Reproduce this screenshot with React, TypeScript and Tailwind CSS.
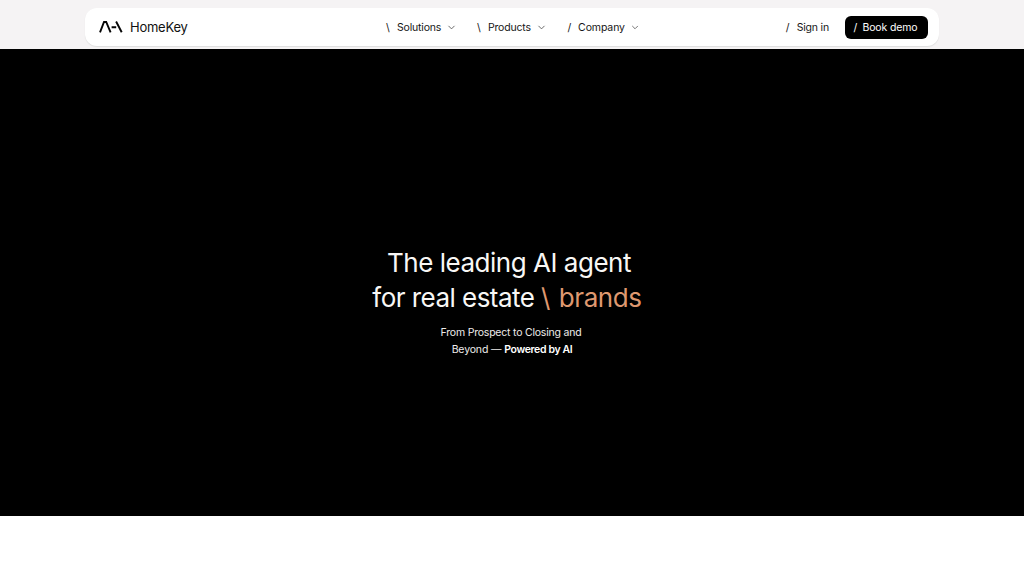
import { ChevronDown } from "lucide-react";

const links = [
  { mark: "\\", label: "Solutions", width: "w-[91px]", gap: "w-[11px]", text: "tracking-[-0.18px]" },
  { mark: "\\", label: "Products", width: "w-[90.5px]", gap: "w-[11px]", text: "tracking-[-0.18px]" },
  { mark: "/", label: "Company", width: "w-[72.5px]", gap: "w-[11.5px]", text: "tracking-[-0.1px]" },
];

function Logo() {
  return (
    <a href="#" className="flex w-[287.5px] items-center">
      <svg width="24" height="12" viewBox="0 0 24 12" fill="none" stroke="#050505" strokeWidth="1.9">
        <path d="M1 11.3 5 1H7.2l4.4 10.3M12.6 6.2h4.6M17.1.5l5.6 10.8" />
      </svg>
      <span className="ml-[7.5px] text-[13px] leading-4 tracking-[-0.25px] text-[#111]">HomeKey</span>
    </a>
  );
}

export default function App() {
  return (
    <div className="min-h-[576px] bg-white font-['Inter',sans-serif]">
      <header className="h-[49px] bg-[#f5f3f4] px-[85px] pt-2">
        <nav className="flex h-[38px] w-[854px] items-center rounded-xl bg-white pr-[11px] pl-[13.5px] text-[10.5px] leading-[17px] text-[#161616] shadow-[0_1px_1px_#dedede]">
          <Logo />
          <div className="flex pt-px">
            {links.map((link) => (
              <a key={link.label} href="#" className={`flex items-center ${link.width}`}>
                <span className={link.gap}>{link.mark}</span>
                <span className={link.text}>{link.label}</span>
                <ChevronDown size={11} strokeWidth={1.9} className="ml-[5px] text-[#555]" />
              </a>
            ))}
          </div>
          <a href="#" className="ml-auto flex pt-px">
            <span className="w-[11px]">/</span>
            <span className="tracking-[-0.18px]">Sign in</span>
          </a>
          <a href="#" className="ml-[16px] flex h-[23px] w-[83px] items-center rounded-[6px] bg-black pt-px pl-[8.5px] whitespace-nowrap text-white">
            <span className="w-[9px]">/</span>
            <span className="tracking-[-0.15px]">Book demo</span>
          </a>
        </nav>
      </header>
      <main className="h-[467px] bg-black pt-[196px] text-center text-[#f8f7f5]">
        <h1 className="flex flex-col items-center text-[26px] leading-[35px] font-normal">
          <span className="mr-[6px] tracking-[-0.48px]">The leading AI agent</span>
          <span className="mr-[10px] tracking-[-0.54px]">
            for real estate{" "}
            <span className="text-[#df986f]">
              <span className="mr-[2px]">\</span> <span className="tracking-[-0.4px]">brands</span>
            </span>
          </span>
        </h1>
        <p className="mt-[9px] flex flex-col items-center text-[10.5px] leading-[17px] text-[#eeeceb]">
          <span className="mr-[2px] tracking-[-0.21px]">From Prospect to Closing and</span>
          <span className="tracking-[-0.14px]">
            Beyond — <strong className="font-semibold tracking-[-0.36px] text-white">Powered by AI</strong>
          </span>
        </p>
      </main>
    </div>
  );
}
